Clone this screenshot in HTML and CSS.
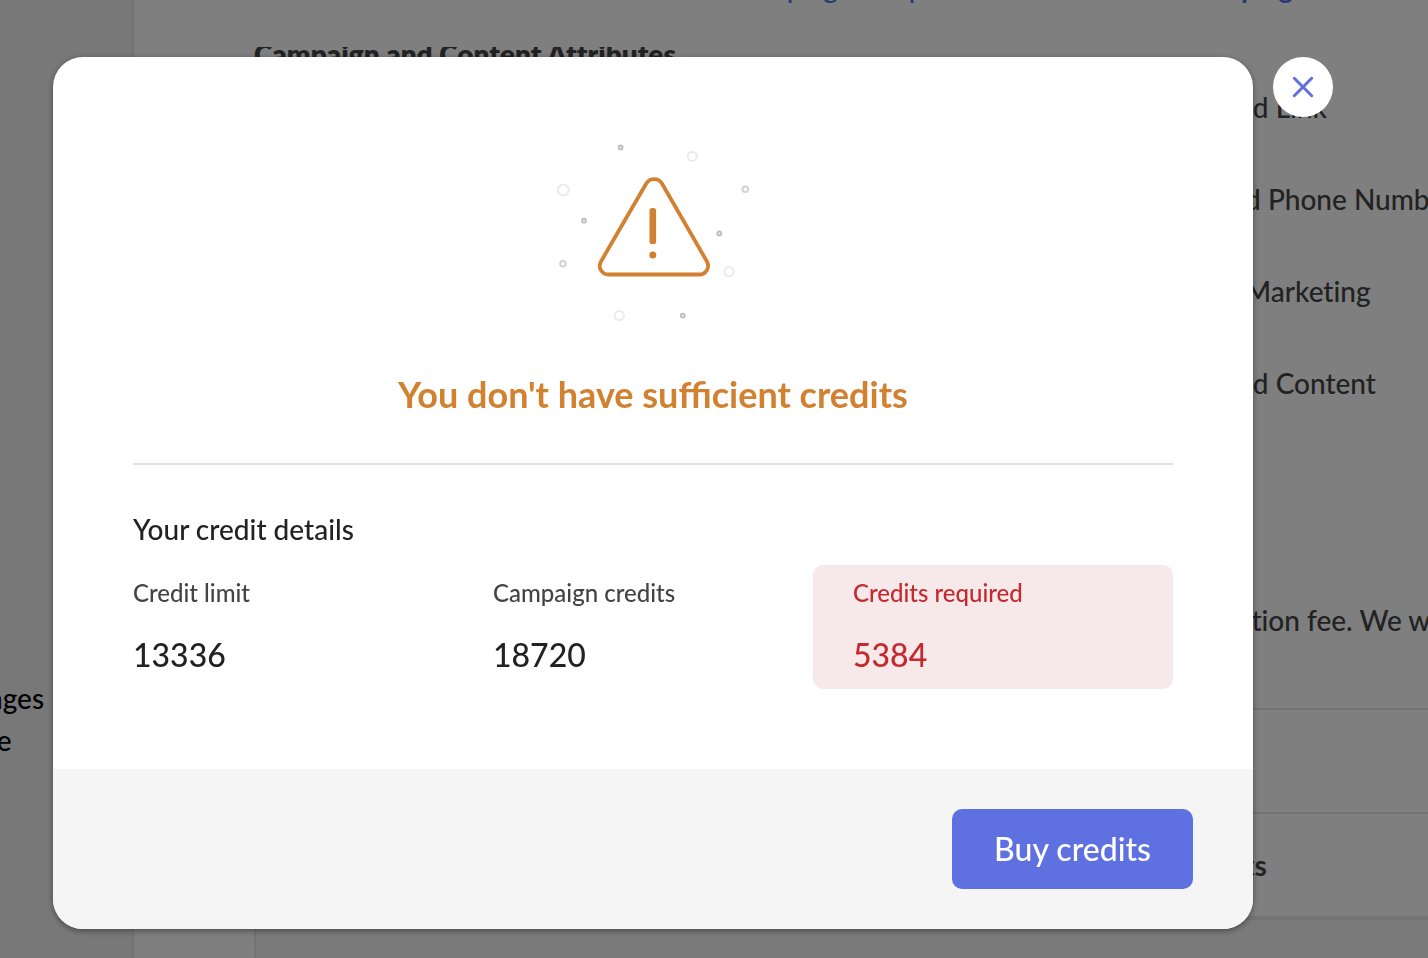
FILE: index.html
```html
<!DOCTYPE html>
<html lang="en">
<head>
  <meta charset="UTF-8">
  <meta name="viewport" content="width=device-width, initial-scale=1.0">
  <title>Buy credits</title>
  <link rel="stylesheet" href="styles.css">
</head>
<body>

  <div class="page">
    <aside class="sidebar">
      <p class="sidebar-note">changes<br>made</p>
    </aside>

    <main class="main">
      <nav class="steps">
        <a href="#" class="step">Campaign template</a>
        <a href="#" class="step active">Campaign</a>
      </nav>

      <div class="content">
        <h2 class="content-title">Campaign and Content Attributes</h2>
        <ul class="attributes">
          <li>ed Link</li>
          <li>&nbsp;d Phone Number</li>
          <li>&nbsp;Marketing</li>
          <li>ed Content</li>
        </ul>
        <p class="fee-note">ction fee. We will</p>
        <div class="panel">
          <div class="panel-row"></div>
          <div class="panel-row total">ts</div>
        </div>
      </div>
    </main>
  </div>

  <div class="overlay">
    <div class="modal" role="dialog" aria-modal="true" aria-labelledby="modalTitle">
      <div class="modal-body">
        <svg class="warning-icon" width="226" height="200" viewBox="0 0 226 200" fill="none" aria-hidden="true">
          <g stroke="#ebebeb" stroke-width="2">
            <circle cx="23.3" cy="60" r="5.4"/>
            <circle cx="152.3" cy="26.3" r="4.6"/>
            <circle cx="189" cy="141.7" r="4.6"/>
            <circle cx="79.3" cy="185.5" r="4.6"/>
          </g>
          <g stroke="#d2d2d2" stroke-width="2">
            <circle cx="205.3" cy="59.2" r="2.8"/>
            <circle cx="23" cy="133.7" r="2.8"/>
          </g>
          <g stroke="#bdbdbd" stroke-width="1.9">
            <circle cx="80.6" cy="17.4" r="1.9"/>
            <circle cx="44" cy="90.7" r="1.9"/>
            <circle cx="179.4" cy="103.4" r="1.9"/>
            <circle cx="142.8" cy="185.6" r="1.9"/>
          </g>
          <path d="M106.4 53.3 61.1 131.2C57.6 137.4 61.6 144.5 68.5 144.5H159C165.9 144.5 170.4 137.4 166.8 131.2L121.8 53.3C118.4 47.6 109.8 47.6 106.4 53.3Z" stroke="#d28130" stroke-width="3.8"/>
          <rect x="109.5" y="78" width="6.6" height="36" rx="2.6" fill="#d28130"/>
          <circle cx="112.8" cy="125" r="3.5" fill="#d28130"/>
        </svg>
        <h1 class="modal-title" id="modalTitle">You don't have sufficient credits</h1>

        <section class="details">
          <h2 class="details-title">Your credit details</h2>
          <dl class="credits">
            <div class="credit">
              <dt>Credit limit</dt>
              <dd>13336</dd>
            </div>
            <div class="credit">
              <dt>Campaign credits</dt>
              <dd>18720</dd>
            </div>
            <div class="credit required">
              <dt>Credits required</dt>
              <dd>5384</dd>
            </div>
          </dl>
        </section>
      </div>

      <div class="modal-footer">
        <button type="button" class="buy-btn">Buy credits</button>
      </div>
    </div>

    <button type="button" class="close-btn" aria-label="Close">
      <svg width="24" height="24" viewBox="0 0 24 24" aria-hidden="true">
        <path d="M3.3 3.3 20.7 20.7M20.7 3.3 3.3 20.7" stroke="#5f70e1" stroke-width="3" stroke-linecap="round"/>
      </svg>
    </button>
  </div>

</body>
</html>
```
FILE: styles.css
```css
* {
  box-sizing: border-box;
  margin: 0;
  padding: 0;
}

body {
  font-family: Lato, "Liberation Sans", sans-serif;
  font-size: 28px;
  font-weight: 500;
  font-variant-ligatures: none;
  line-height: 34px;
  color: #222;
}

/* page behind the dialog */
.page {
  display: flex;
  height: 100vh;
  overflow: hidden;
  background: #f1f1f1;
}

.sidebar {
  flex: 0 0 134px;
  padding-top: 677px;
  overflow: hidden;
  border-right: 2px solid #e6e6e6;
}

.sidebar-note {
  margin-left: -56px;
  line-height: 42px;
  color: #000;
}

.main {
  flex: 1;
  min-width: 0;
  display: flex;
  flex-direction: column;
  background: #fff;
  color: #444;
  white-space: nowrap;
}

.steps {
  flex: 0 0 47px;
  display: flex;
  gap: 215px;
  padding-left: 597px;
  overflow: hidden;
}

.step {
  margin-top: -30px;
  color: #5f70e1;
  text-decoration: none;
}

.step.active {
  font-weight: bold;
}

.content {
  flex: 1;
  min-height: 0;
  padding-left: 120px;
  overflow: hidden;
}

.content-title {
  margin: -10px 0 19px;
  font-size: 28px;
  font-weight: 800;
}

.attributes {
  display: grid;
  gap: 58px;
  padding-left: 984px;
  list-style: none;
}

.fee-note {
  margin: 203px 0 71px;
  padding-left: 984px;
}

.panel {
  height: 400px;
  background: #f4f4f4;
  border-top: 2px solid #e6e6e6;
  border-left: 2px solid #e6e6e6;
}

.panel-row {
  height: 104px;
  padding: 34px 0 0 988px;
  background: #fff;
  border-bottom: 2px solid #e6e6e6;
}

.panel-row.total {
  height: 106px;
  border-bottom-width: 4px;
  font-weight: bold;
}

/* dialog */
.overlay {
  position: fixed;
  inset: 0;
  display: flex;
  align-items: flex-start;
  gap: 20px;
  padding: 57px 95px 29px 53px;
  background: rgba(0, 0, 0, 0.5);
  overflow: auto;
}

.modal {
  flex: 1;
  border-radius: 30px;
  background: #fff;
  box-shadow: 0 2px 6px rgba(0, 0, 0, 0.4);
  overflow: hidden;
}

.modal-body {
  padding: 73px 80px 80px;
}

.warning-icon {
  display: block;
  margin: 0 auto 40px;
}

.modal-title {
  padding-bottom: 44px;
  border-bottom: 2px solid #dcdfe6;
  font-size: 36px;
  font-variant-ligatures: normal;
  line-height: 49px;
  text-align: center;
  color: #d28130;
}

.details {
  padding-top: 44px;
}

.details-title {
  margin-bottom: 16px;
  font-size: 28px;
  line-height: 40px;
  font-weight: 500;
}

.credits {
  display: grid;
  grid-template-columns: repeat(3, 1fr);
  margin-left: -40px;
}

.credit {
  padding: 8px 40px 14px;
  border-radius: 10px;
}

.credit dt {
  margin-bottom: 22px;
  font-size: 24px;
  line-height: 40px;
  color: #444;
}

.credit dd {
  font-size: 32px;
  line-height: 40px;
}

.credit.required {
  background: #f7e8e9;
}

.credit.required dt,
.credit.required dd {
  color: #c4292f;
}

.modal-footer {
  display: flex;
  justify-content: flex-end;
  padding: 40px 60px;
  background: #f5f5f5;
}

.buy-btn {
  height: 80px;
  padding: 0 42px 2px;
  border: none;
  border-radius: 10px;
  background: #5f70e1;
  color: #fff;
  font-family: inherit;
  font-size: 32px;
  font-weight: 500;
  cursor: pointer;
}

.buy-btn:hover {
  background: #4f60d2;
}

.close-btn {
  flex: 0 0 60px;
  height: 60px;
  display: flex;
  align-items: center;
  justify-content: center;
  border: none;
  border-radius: 50%;
  background: #fff;
  cursor: pointer;
}
```
